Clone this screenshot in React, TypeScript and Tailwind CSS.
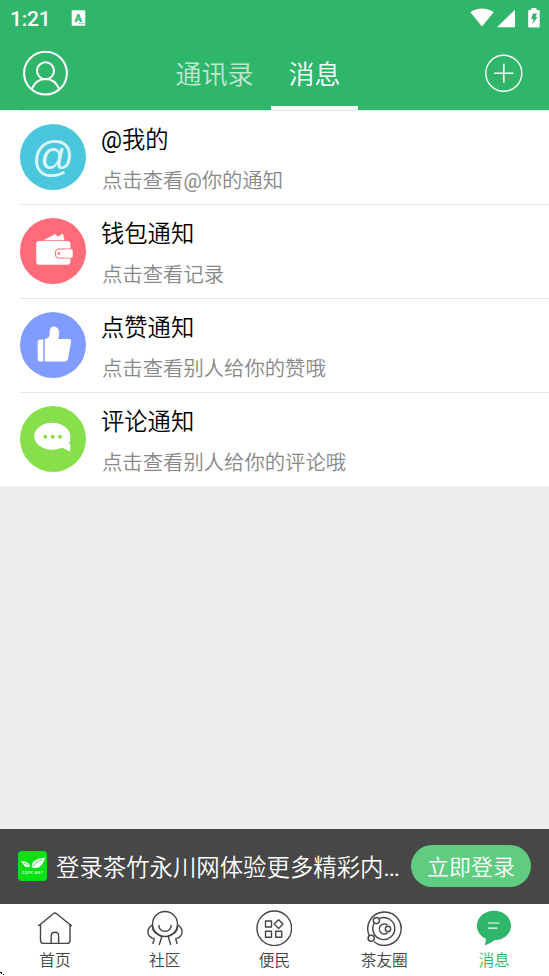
import { ReactNode } from "react";

const App = () => {
  return (
    <div className="relative flex h-screen w-full flex-col overflow-hidden bg-[#ededed] font-[Roboto,'Noto_Sans_CJK_SC',sans-serif] [font-weight:350]">
      <StatusBar />
      <Header />
      <main className="flex-1">
        <div className="border-b border-[#f4f4f4]">
          {notices.map((notice, index) => (
            <NoticeRow key={index} {...notice} />
          ))}
        </div>
      </main>
      <LoginBanner />
      <TabBar />
      <svg
        className="absolute bottom-0 left-0"
        width="5"
        height="5"
        shapeRendering="crispEdges"
      >
        <path d="M0 1h1v1h-1zM1 1h1v1h-1zM1 2h1v1h-1zM3 3h1v1h-1z" />
      </svg>
    </div>
  );
};

export default App;

const StatusBar = () => (
  <div className="flex h-9 shrink-0 items-center justify-between bg-[#30b66a] pr-[9px] pl-2.5 text-white">
    <div className="flex items-center gap-[21px]">
      <span className="w-10 pt-[3px] text-[21px] leading-none font-medium tracking-[-0.2px]">
        1:21
      </span>
      <svg width="15" height="16" viewBox="0 0 15 16">
        <rect x="0.7" y="0.3" width="13.6" height="15.4" rx="1.2" fill="#fff" />
        <text
          x="7.3"
          y="11.6"
          textAnchor="middle"
          fontSize="11"
          fontWeight="900"
          fill="#30b66a"
        >
          A
        </text>
        <path d="M8 13.7h5.5" stroke="#30b66a" strokeDasharray="1 0.6" />
      </svg>
    </div>
    <div className="flex items-center">
      <svg width="24" height="20" viewBox="0 0 24 20" fill="currentColor">
        <path d="M0.4 4.3C7.2-.7 16.8-.7 23.6 4.3L12 18.5z" />
      </svg>
      <svg className="ml-[3px]" width="18" height="19" viewBox="0 0 18 19">
        <path d="M0 18.2L18 .7v17.5z" fill="currentColor" />
      </svg>
      <svg className="ml-[13px]" width="12" height="20" viewBox="0 0 12 20">
        <path
          d="M3.3 0h5.2v2h2.2q1 0 1 1v15.5q0 1-1 1H1.2q-1 0-1-1V3q0-1 1-1h2.1z"
          fill="currentColor"
        />
        <path d="M5 5.5h4L7.5 9h2l-5 7 1-5H3z" fill="#30b66a" />
      </svg>
    </div>
  </div>
);

const Header = () => (
  <header className="flex h-[74px] shrink-0 items-center justify-between bg-[#30b66a] pr-[26px] pl-[23px] text-white">
    <svg
      width="45"
      height="45"
      viewBox="0 0 45 45"
      fill="none"
      stroke="currentColor"
      strokeWidth="2"
    >
      <circle cx="22.5" cy="22.2" r="21.4" />
      <circle cx="22.5" cy="19.7" r="8.5" />
      <path d="M8.7 38.2C11.5 31.2 16.2 27.9 22.5 27.9S33.5 31.2 36.3 38.2" />
    </svg>
    <nav className="mr-[39px] flex h-full text-[26px]">
      <button className="w-[114px] pt-[5px] pl-[2px] text-white/70">
        通讯录
      </button>
      <button className="w-[87px] border-b-4 border-white pt-[9px] pl-px">
        消息
      </button>
    </nav>
    <svg
      width="38"
      height="38"
      viewBox="0 0 38 38"
      fill="none"
      stroke="currentColor"
      strokeWidth="1.4"
    >
      <circle cx="18.8" cy="19.2" r="18" />
      <path d="M9.3 19.2h19M18.8 9.7v19" strokeWidth="1.6" />
    </svg>
  </header>
);

type Notice = {
  title: ReactNode;
  hint: ReactNode;
  icon: ReactNode;
};

const At = () => <span className="font-normal">@</span>;

const notices: Notice[] = [
  {
    title: (
      <>
        <At />
        我的
      </>
    ),
    hint: (
      <>
        点击查看
        <At />
        你的通知
      </>
    ),
    icon: (
      <>
        <circle cx="33" cy="33" r="33" fill="#4ac6dd" />
        <text
          x="32.3"
          y="47"
          textAnchor="middle"
          fontFamily="Liberation Sans"
          fontStyle="italic"
          fontSize="42"
          fontWeight="400"
          fill="#dcf6f8"
        >
          @
        </text>
      </>
    ),
  },
  {
    title: "钱包通知",
    hint: "点击查看记录",
    icon: (
      <>
        <circle cx="33" cy="33" r="33" fill="#ff6b78" />
        <path
          d="M23.5 22.2L35.2 16l2.7 2.8 5-3.2 1.6 6.6z"
          fill="#fff"
        />
        <rect x="16.2" y="23" width="34.2" height="23.7" rx="3" fill="#fff" />
        <path
          d="M53 31H38.5Q35.5 31 35.5 34V37Q35.5 40 38.5 40H53z"
          fill="#fff"
          stroke="#ff6b78"
          strokeWidth="1"
        />
        <rect x="44" y="31.5" width="8.5" height="8" rx="1.5" fill="#fff" />
        <circle cx="38.8" cy="35.6" r="1.4" fill="#ff6b78" />
      </>
    ),
  },
  {
    title: "点赞通知",
    hint: "点击查看别人给你的赞哦",
    icon: (
      <>
        <circle cx="33" cy="33" r="33" fill="#809cff" />
        <path
          d="M20 27.5h3.3v22H20q-2.3 0-2.3-2.3V29.8q0-2.3 2.3-2.3zM24.8 27.5l4-2.6q1.2-1.3.8-5.2.2-5 4-5.3 5 .2 5.6 5.5.2 4-1 7.1h10.5q3 .2 2.3 3.5l-3 16.3q-.5 2.7-3.5 2.7H24.8z"
          fill="#fff"
        />
      </>
    ),
  },
  {
    title: "评论通知",
    hint: "点击查看别人给你的评论哦",
    icon: (
      <>
        <circle cx="33" cy="33" r="33" fill="#88df4c" />
        <ellipse cx="32.2" cy="30.3" rx="18" ry="13.5" fill="#fff" />
        <path d="M50.2 32v13.7l-8.7-4.5z" fill="#fff" />
        <path
          d="M50.5 34q-.8 2.5-2.2 4l2.4-1z"
          fill="#88df4c"
        />
        <circle cx="25.3" cy="30.7" r="2" fill="#88df4c" />
        <circle cx="32.7" cy="30.7" r="2" fill="#88df4c" />
        <circle cx="40" cy="30.7" r="2" fill="#88df4c" />
      </>
    ),
  },
];

const NoticeRow = ({ title, hint, icon }: Notice) => (
  <div className="bg-white pl-5">
    <div className="flex h-[94px] items-center border-t border-[#e7e7e7]">
      <svg
        className="mb-px shrink-0"
        width="66"
        height="66"
        viewBox="0 0 66 66"
      >
        {icon}
      </svg>
      <div className="ml-[15px] flex flex-col gap-[7px] pt-[5px]">
        <span className="text-[23.3px] leading-[34px] text-black">
          {title}
        </span>
        <span className="pl-px text-[20.35px] leading-[34px] text-[#888]">
          {hint}
        </span>
      </div>
    </div>
  </div>
);

const LoginBanner = () => (
  <div className="flex h-[75px] shrink-0 items-center bg-[#474747] pr-[18px] pl-[18px] text-white">
    <svg className="mb-px shrink-0" width="29" height="30" viewBox="0 0 29 30">
      <rect width="29" height="30" rx="3.5" fill="#05e214" />
      <path
        d="M2.5 10.2C8 9.7 12 12 12.2 16.2 6 17 5.5 12.5 2.5 10.2zM27 6.5C25.5 13 22 18.5 14 16.8 12.5 10 19 7.5 27 6.5z"
        fill="#fff"
      />
      <path
        d="M5.5 12Q9.5 12.8 12.2 16.5M24 8.5Q17 11 13.5 17"
        fill="none"
        stroke="#05e214"
        strokeWidth="0.8"
      />
      <text
        x="14.8"
        y="22.8"
        textAnchor="middle"
        fontSize="3.7"
        fontWeight="500"
        letterSpacing="0.5"
        fill="#fff"
      >
        CQYC.NET
      </text>
    </svg>
    <span className="ml-[9px] flex-1 pt-1 text-[23.4px] whitespace-nowrap">
      登录茶竹永川网体验更多精彩内
      <span className="font-normal tracking-[-1px]">...</span>
    </span>
    <button className="mb-px h-[42px] w-[120px] shrink-0 rounded-full bg-[#60cc81] pt-[3px] text-[22px]">
      立即登录
    </button>
  </div>
);

const tabs: { label: string; icon: ReactNode; active?: boolean }[] = [
  {
    label: "首页",
    icon: (
      <>
        <path d="M1.2 15.8L3.5 14.3 16.3 3.7Q18 2.2 19.7 3.7L32.5 14.3 34.8 15.8" />
        <path d="M3.5 14.5V30.2Q3.5 33.4 6.7 33.4H29.8Q33 33.4 33 30.2V14.5" />
        <path d="M14.2 33V26Q14.2 22.3 18 22.3T21.6 26V33" />
      </>
    ),
  },
  {
    label: "社区",
    icon: (
      <>
        <circle cx="18" cy="14" r="12.5" />
        <path d="M11.8 15Q12 21.2 18 21.2T24.2 15" />
        <path d="M5.2 15.2Q.9 17.8.9 21.8T4.8 27.8L7.3 28.8 5.8 34M5.5 16.5Q5.4 20.5 9 23.4L14.8 26.6 12.2 35" />
        <path d="M30.8 15.2Q35.1 17.8 35.1 21.8T31.2 27.8L28.7 28.8 30.2 34M30.5 16.5Q30.6 20.5 27 23.4L21.2 26.6 23.8 35" />
      </>
    ),
  },
  {
    label: "便民",
    icon: (
      <>
        <circle cx="18.3" cy="18.3" r="17.3" />
        <path d="M9.5 11h6v6h-6zM9.5 21.2h6v6h-6zM19.7 21.2h6v6h-6zM22.6 9.7l4.4 4.4-4.4 4.4-4.4-4.4z" />
      </>
    ),
  },
  {
    label: "茶友圈",
    icon: (
      <>
        <path d="M3.2 25.5A16.7 16.7 0 1 1 8 31.7" />
        <path d="M13.8 8.3A11 11 0 1 1 8 13.5" />
        <circle cx="10.4" cy="10.6" r="3.1" />
        <circle cx="5.2" cy="28.3" r="3.1" />
        <path d="M21.5 15.1A5 5 0 1 0 21.5 22.9" />
        <circle cx="22" cy="19" r="2.7" />
      </>
    ),
  },
  {
    label: "消息",
    active: true,
    icon: (
      <>
        <path
          d="M18 .8C8.5.8.9 7.3.9 15.7c0 6 3.6 10.5 9 13L9 35.4q4.5-1.5 9.5-5.2C27.5 30.2 35 24 35 15.7S27.5.8 18 .8z"
          fill="currentColor"
          stroke="none"
        />
        <path d="M12 13h11.5M12 18.2h9.5" stroke="#fff" strokeWidth="1.2" />
      </>
    ),
  },
];

const TabBar = () => (
  <nav className="grid h-[72px] shrink-0 grid-cols-5 bg-white text-[#444]">
    {tabs.map(({ label, icon, active }) => (
      <button
        key={label}
        className={
          active
            ? "flex flex-col items-center pt-1.5 text-[#30b66a]"
            : "flex flex-col items-center pt-1.5"
        }
      >
        <svg
          width="36"
          height="36"
          viewBox="0 0 36 36"
          fill="none"
          stroke="currentColor"
          strokeWidth="1.4"
          strokeLinejoin="round"
        >
          {icon}
        </svg>
        <span className="mt-[3px] text-[15.7px] leading-6">{label}</span>
      </button>
    ))}
  </nav>
);
